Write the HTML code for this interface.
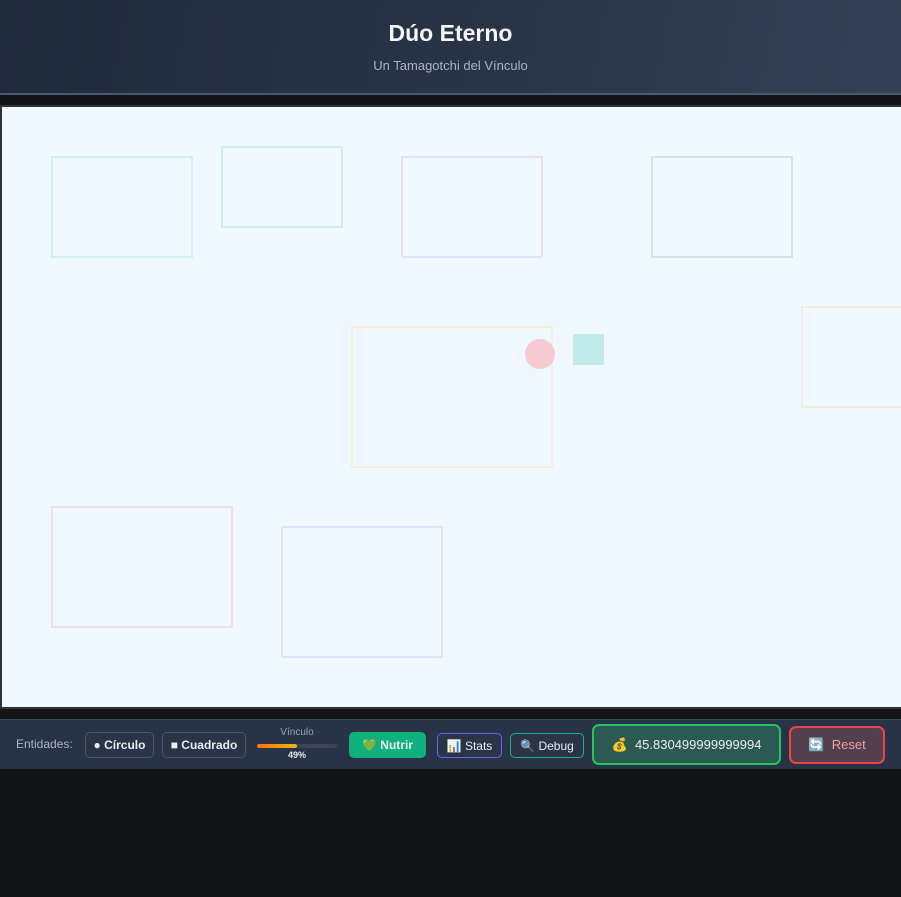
<!DOCTYPE html>
<html><head><meta charset="utf-8"><style>
*{margin:0;padding:0;box-sizing:border-box}
body{width:901px;height:897px;background:#111518;font-family:"Liberation Sans","DejaVu Sans",sans-serif;position:relative;overflow:hidden}
.hdr{position:absolute;left:0;top:0;width:901px;height:95px;background:linear-gradient(100deg,#1f2a3b,#2a3548 60%,#334055);border-bottom:2px solid #4a5a70;text-align:center}
.hdr h1{position:absolute;top:20px;width:100%;font-size:23px;font-weight:bold;color:#f5f7fa}
.hdr p{position:absolute;top:58px;width:100%;font-size:13px;color:#aab4c2}
.cv{position:absolute;left:0;top:105px;width:903px;height:604px;border:2px solid #333;background:#eff7ff;overflow:hidden}
.r{position:absolute;border:2px solid}
.bar{position:absolute;left:0;top:719px;width:901px;height:50px;background:#283347;border-top:1px solid #3b475b}
.b{position:absolute;height:26px;border-radius:5px;font-size:12px;color:#e8edf3;display:flex;align-items:center;justify-content:center;font-weight:bold}
</style></head><body>
<div class="hdr"><h1>Dúo Eterno</h1><p>Un Tamagotchi del Vínculo</p></div>
<div class="cv">
<div class="r" style="left:49px;top:49px;width:142px;height:102px;border-color:#d2efe9"></div>
<div class="r" style="left:219px;top:39px;width:122px;height:82px;border-color:#cdefe5"></div>
<div class="r" style="left:399px;top:49px;width:142px;height:102px;border-color:#e6defa"></div>
<div class="r" style="left:649px;top:49px;width:142px;height:102px;border-color:#d8dfe8"></div>
<div class="r" style="left:799px;top:199px;width:142px;height:102px;border-color:#f2ecdc"></div>
<div class="r" style="left:349px;top:219px;width:202px;height:142px;border-color:#f3efd8"></div>
<div class="r" style="left:49px;top:399px;width:182px;height:122px;border-color:#f0dcef"></div>
<div class="r" style="left:279px;top:419px;width:162px;height:132px;border-color:#e0e0fa"></div>
<div style="position:absolute;left:523px;top:232px;width:30px;height:30px;border-radius:50%;background:#f6cad1"></div>
<div style="position:absolute;left:571px;top:227px;width:31px;height:31px;background:#bfeaea"></div>
</div>
<div class="bar">
<div style="position:absolute;left:16px;top:17px;font-size:12px;color:#aab4c2">Entidades:</div>
<div class="b" style="left:85px;top:12px;width:69px;border:1px solid #4a5568;background:#2a3446">● Círculo</div>
<div class="b" style="left:162px;top:12px;width:84px;border:1px solid #4a5568;background:#2a3446">■ Cuadrado</div>
<div style="position:absolute;left:257px;top:7px;width:80px;text-align:center;font-size:10px;color:#9aa4b2">Vínculo</div>
<div style="position:absolute;left:257px;top:24px;width:80px;height:4px;background:#3b4556;border-radius:2px"><div style="width:40px;height:4px;background:linear-gradient(90deg,#f97316,#eab308);border-radius:2px"></div></div>
<div style="position:absolute;left:257px;top:30px;width:80px;text-align:center;font-size:9px;color:#e8edf3;font-weight:bold">49%</div>
<div class="b" style="left:349px;top:12px;width:77px;background:#10b07c">💚 Nutrir</div>
<div class="b" style="left:437px;top:13px;width:65px;height:25px;border:1px solid #6366f1;background:#2a3446;font-weight:normal">📊 Stats</div>
<div class="b" style="left:510px;top:13px;width:74px;height:25px;border:1px solid #10b981;background:#2a3446;font-weight:normal">🔍 Debug</div>
<div class="b" style="left:592px;top:4px;width:189px;height:41px;border:2px solid #22c55e;background:#2c5a52;border-radius:7px;font-size:13px;font-weight:normal">💰&nbsp; 45.830499999999994</div>
<div class="b" style="left:789px;top:6px;width:96px;height:38px;border:2px solid #ef4444;background:#533f4d;border-radius:7px;font-size:13px;color:#f0a0a0;font-weight:normal">🔄&nbsp; Reset</div>
</div>
</body></html>
